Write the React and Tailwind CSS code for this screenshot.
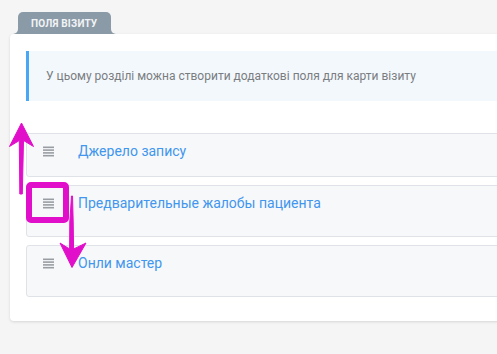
import React from "react";

function DragIcon() {
  return (
    <svg width="11" height="11" viewBox="0 0 11 11" className="shrink-0">
      <rect x="0" y="0.5" width="11" height="1.6" fill="#9a9ea3" />
      <rect x="0" y="3.3" width="11" height="1.6" fill="#9a9ea3" />
      <rect x="0" y="6.1" width="11" height="1.6" fill="#9a9ea3" />
      <rect x="0" y="8.9" width="11" height="1.6" fill="#9a9ea3" />
    </svg>
  );
}

function Row({ label, h }) {
  return (
    <div className={`flex items-start rounded-[3px] border border-[#dfe3e8] bg-[#f7f8fa] pl-[16px] pt-[11px] ${h}`}>
      <div className="pt-[1px]">
        <DragIcon />
      </div>
      <div className="ml-[24px] -mt-[4px] text-[14px] leading-[20px] text-[#4196ee]">{label}</div>
    </div>
  );
}

export default function App() {
  return (
    <div
      className="relative h-[354px] w-[497px] overflow-hidden bg-[#f5f5f5]"
      style={{ fontFamily: "Roboto, 'Noto Sans', sans-serif" }}
    >
      <div className="pl-[10px] pt-[12px]">
        <div className="ml-[8px] flex">
          <div className="relative flex h-[22px] items-center rounded-t-[5px] bg-[#8b9aa7] pl-[13px] pr-[14px]">
            <span className="absolute bottom-0 left-[-5px] block h-[5px] w-[5px] overflow-hidden">
              <span className="block h-full w-full rounded-br-[5px] shadow-[5px_5px_0_5px_#8b9aa7]" />
            </span>
            <span className="absolute bottom-0 right-[-5px] block h-[5px] w-[5px] overflow-hidden">
              <span className="block h-full w-full rounded-bl-[5px] shadow-[-5px_5px_0_5px_#8b9aa7]" />
            </span>
            <span className="text-[10px] font-bold tracking-[0.2px] text-[#f1f4f6]">ПОЛЯ ВІЗИТУ</span>
          </div>
        </div>
        <div className="w-[520px] rounded-[4px] bg-white px-[16px] pb-[24px] pt-[17px] shadow-[0_1px_3px_rgba(0,0,0,0.13)]">
          <div className="flex h-[50px] items-center border-l-[3px] border-[#4aa7f4] bg-[#f3f8fd] pl-[17px] text-[12px] text-[#7a7d80]">
            У цьому розділі можна створити додаткові поля для карти візиту
          </div>
          <div className="mt-[32px] flex flex-col gap-[8px]">
            <Row label="Джерело запису" h="h-[44px]" />
            <Row label="Предварительные жалобы пациента" h="h-[52px]" />
            <Row label="Онли мастер" h="h-[52px]" />
          </div>
        </div>
      </div>

      <svg className="pointer-events-none absolute left-0 top-0" width="497" height="354" viewBox="0 0 497 354">
        <g fill="#e20fca" stroke="#e20fca" strokeLinejoin="round" strokeWidth="1">
          <polygon points="21.5,123 33.5,146.5 23.5,140.5 22.3,194 19.8,194 19.3,140.5 9.5,146.5" />
          <rect x="29" y="185" width="37" height="35" rx="2" fill="none" strokeWidth="6" />
          <polygon points="72.5,196 73.2,222 73.6,249 86,243 72,267.5 60,243 69.6,249 69.8,222 71.5,196" />
        </g>
      </svg>
    </div>
  );
}
